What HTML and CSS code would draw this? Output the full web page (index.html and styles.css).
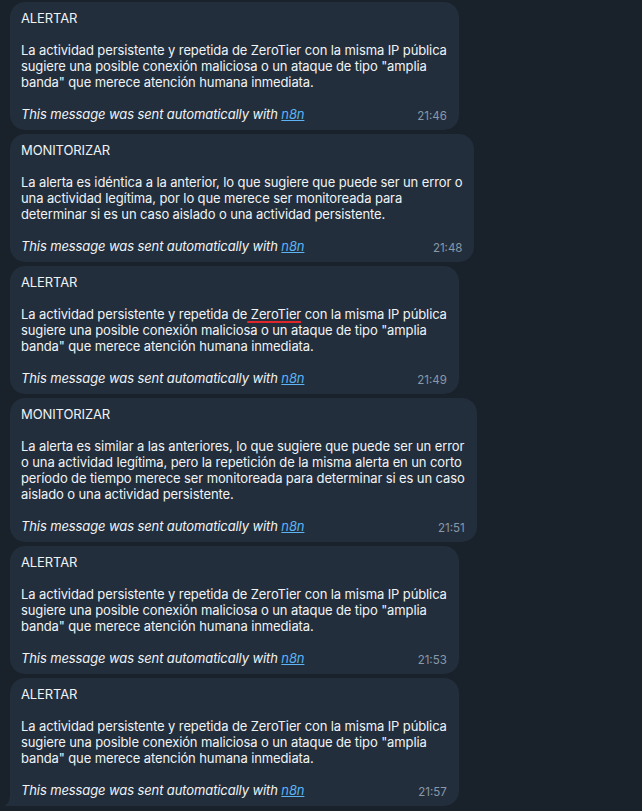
FILE: index.html
```html
<!DOCTYPE html>
<html lang="es">
<head>
<meta charset="utf-8">
<title>Chat</title>
<link rel="stylesheet" href="styles.css">
</head>
<body>
<div class="chat">
  <div class="bubble">
    <div class="title">ALERTAR</div>
    <div class="text">La actividad persistente y repetida de ZeroTier con la misma IP pública<br>sugiere una posible conexión maliciosa o un ataque de tipo "amplia<br>banda" que merece atención humana inmediata.</div>
    <div class="footer"><span class="auto">This message was sent automatically with <a class="link" href="#">n8n</a></span><span class="time">21:46</span></div>
  </div>
  <div class="bubble">
    <div class="title">MONITORIZAR</div>
    <div class="text">La alerta es idéntica a la anterior, lo que sugiere que puede ser un error o<br>una actividad legítima, por lo que merece ser monitoreada para<br>determinar si es un caso aislado o una actividad persistente.</div>
    <div class="footer"><span class="auto">This message was sent automatically with <a class="link" href="#">n8n</a></span><span class="time">21:48</span></div>
  </div>
  <div class="bubble">
    <div class="title">ALERTAR</div>
    <div class="text">La actividad persistente y repetida de<span class="spell"> ZeroTier</span> con la misma IP pública<br>sugiere una posible conexión maliciosa o un ataque de tipo "amplia<br>banda" que merece atención humana inmediata.</div>
    <div class="footer"><span class="auto">This message was sent automatically with <a class="link" href="#">n8n</a></span><span class="time">21:49</span></div>
  </div>
  <div class="bubble">
    <div class="title">MONITORIZAR</div>
    <div class="text">La alerta es similar a las anteriores, lo que sugiere que puede ser un error<br>o una actividad legítima, pero la repetición de la misma alerta en un corto<br>período de tiempo merece ser monitoreada para determinar si es un caso<br>aislado o una actividad persistente.</div>
    <div class="footer"><span class="auto">This message was sent automatically with <a class="link" href="#">n8n</a></span><span class="time">21:51</span></div>
  </div>
  <div class="bubble">
    <div class="title">ALERTAR</div>
    <div class="text">La actividad persistente y repetida de ZeroTier con la misma IP pública<br>sugiere una posible conexión maliciosa o un ataque de tipo "amplia<br>banda" que merece atención humana inmediata.</div>
    <div class="footer"><span class="auto">This message was sent automatically with <a class="link" href="#">n8n</a></span><span class="time">21:53</span></div>
  </div>
  <div class="bubble last">
    <div class="title">ALERTAR</div>
    <div class="text">La actividad persistente y repetida de ZeroTier con la misma IP pública<br>sugiere una posible conexión maliciosa o un ataque de tipo "amplia<br>banda" que merece atención humana inmediata.</div>
    <div class="footer"><span class="auto">This message was sent automatically with <a class="link" href="#">n8n</a></span><span class="time">21:57</span></div>
    <svg class="tail" width="12" height="14" viewBox="0 0 12 14" aria-hidden="true"><path d="M12 0 L12 14 L0 14 C4 12 6 9 6 0 Z" fill="#222e3c"/></svg>
  </div>
</div>
</body>
</html>
```
FILE: styles.css
```css
html, body {
  margin: 0;
  padding: 0;
}
body {
  background: #19212b;
  font-family: "Inter", "Liberation Sans", sans-serif;
  -webkit-font-smoothing: antialiased;
}
.chat {
  display: flex;
  flex-direction: column;
  align-items: flex-start;
  gap: 4px;
  padding: 2px 0 5px 10px;
}
.bubble {
  position: relative;
  background: #222e3c;
  border-radius: 15px;
  padding: 8px 12px 8px 11px;
  font-size: 13px;
  line-height: 16px;
  letter-spacing: -0.11px;
  color: #f0f3f6;
  white-space: nowrap;
}
.bubble.last {
  border-bottom-left-radius: 0;
}
.tail {
  position: absolute;
  left: -6px;
  bottom: 0;
  display: block;
}
.text {
  margin-top: 16px;
}
.footer {
  margin-top: 16px;
  display: flex;
  align-items: flex-end;
}
.auto {
  font-style: italic;
}
.link {
  color: #5cb4f4;
  text-decoration: underline;
}
.time {
  margin-left: auto;
  padding-left: 20px;
  font-size: 11.5px;
  line-height: 14px;
  letter-spacing: 0;
  color: #8a99a9;
  position: relative;
  top: 1px;
}
.spell {
  text-decoration: underline;
  text-decoration-color: #e0262a;
  text-decoration-thickness: 2px;
  text-underline-offset: 2px;
}
```
